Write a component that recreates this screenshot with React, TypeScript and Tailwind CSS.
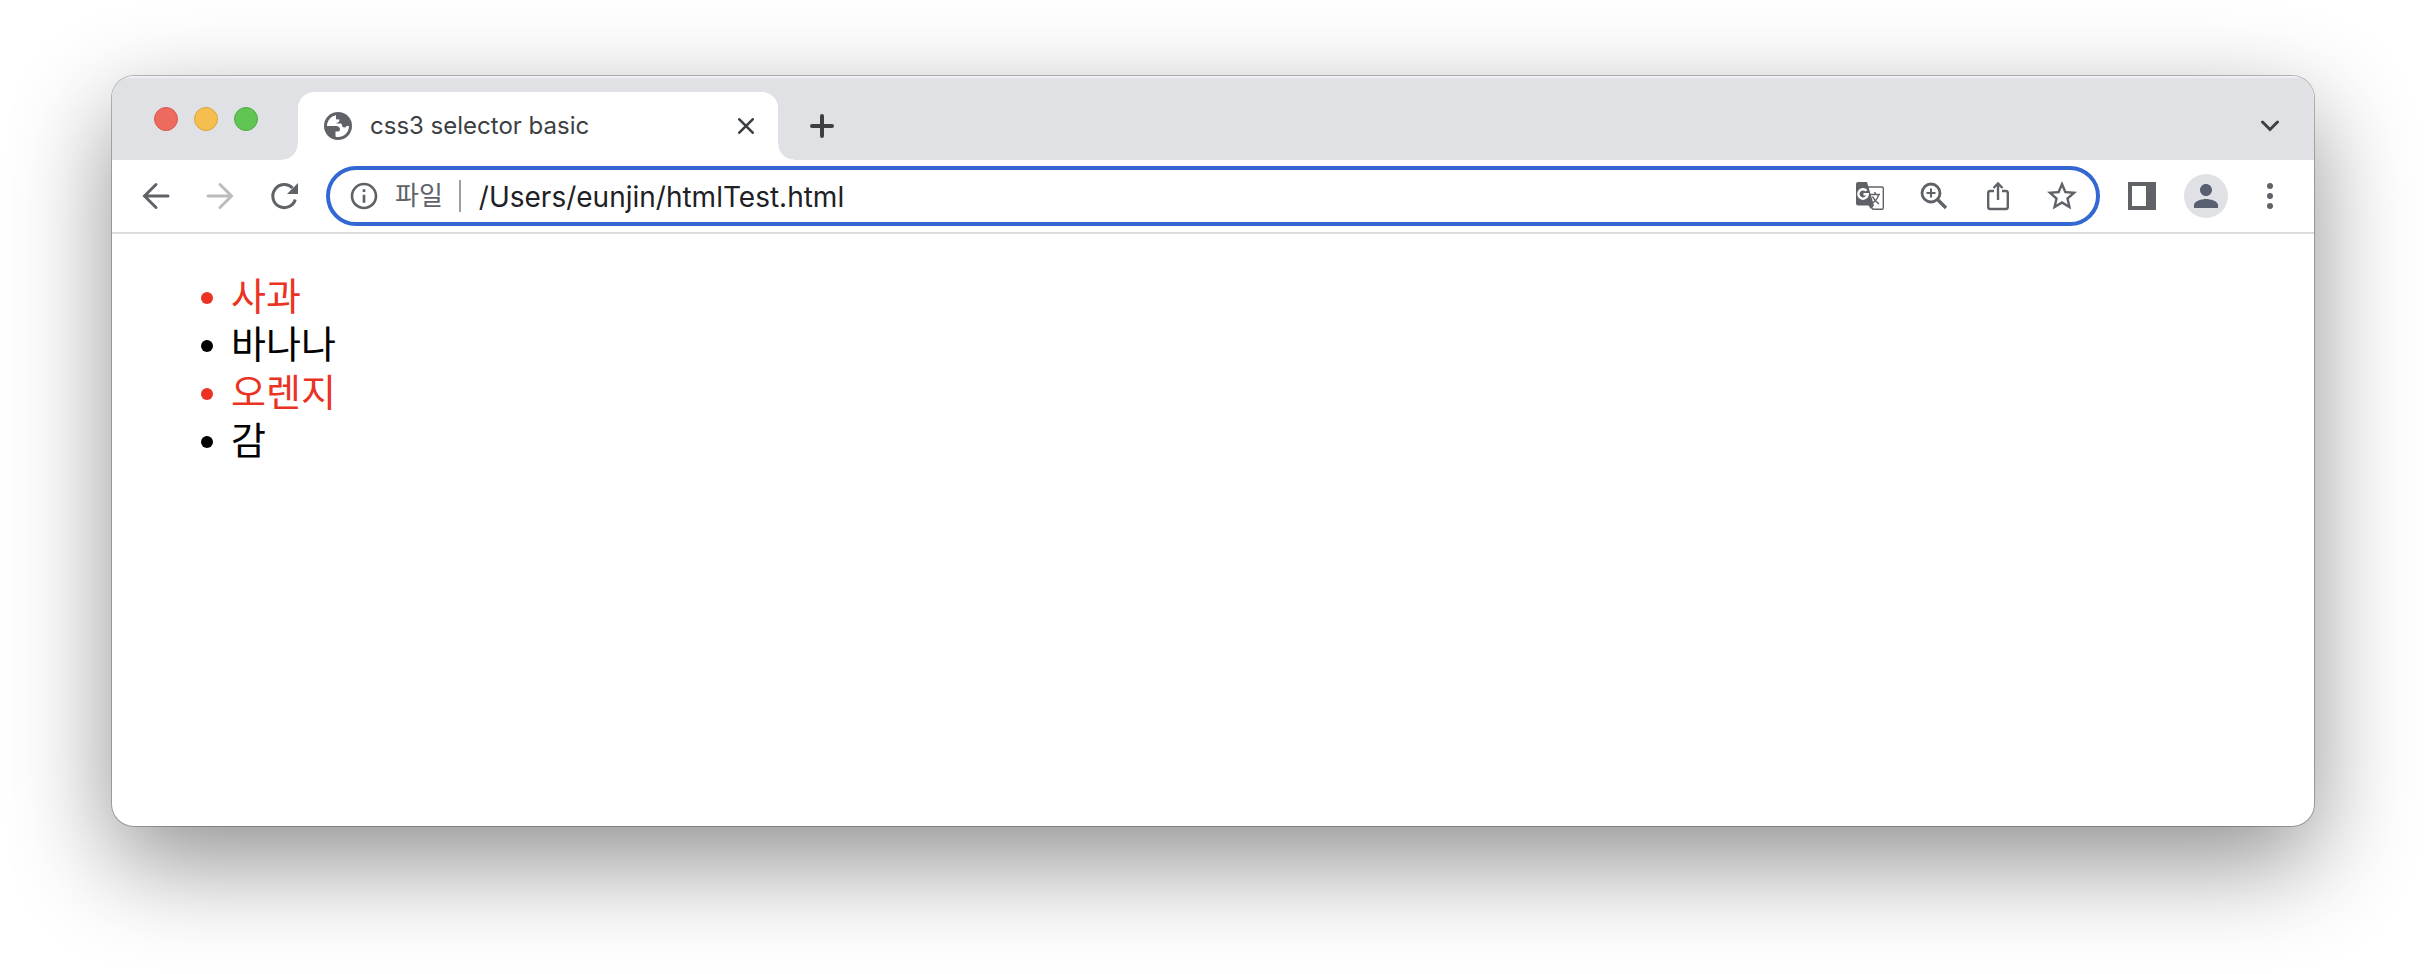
import type { ButtonHTMLAttributes, ReactNode } from "react"
import { MdOutlineInfo, MdPerson, MdStarBorder } from "react-icons/md"

type Fruit = { name: string; highlighted: boolean }

const FRUITS: Fruit[] = [
  { name: "사과", highlighted: true },
  { name: "바나나", highlighted: false },
  { name: "오렌지", highlighted: true },
  { name: "감", highlighted: false },
]

const TRAFFIC_LIGHTS = [
  { label: "닫기", className: "border-[#d9584c] bg-[#ed6a5e]" },
  { label: "최소화", className: "border-[#daa43c] bg-[#f5bf4f]" },
  { label: "확대", className: "border-[#4fab41] bg-[#61c554]" },
]

function IconButton({ label, className = "", children, ...rest }: { label: string; children: ReactNode } & ButtonHTMLAttributes<HTMLButtonElement>) {
  return (
    <button type="button" aria-label={label} className={`flex size-8 shrink-0 items-center justify-center ${className}`} {...rest}>
      {children}
    </button>
  )
}

function GlobeIcon() {
  return (
    <svg viewBox="0 0 28 28" className="size-7 text-[#5f6368]">
      <circle cx="14" cy="14" r="14" fill="currentColor" />
      <path
        d="M3 14C3 8.500 7 4 12 3.200V6.500Q12 7.500 13 7.500H15.500Q15.500 10.500 12.500 10.800V11.500H16.500Q18 11.500 18 13Q18 15.500 20.500 15.500Q22 15.500 22.500 14H25C25 20.500 20 25 14 25Q12.500 25 11.500 24.500V19.500H14Q16 19.500 16 17.500Q16 14 12 14Z"
        fill="#fff"
      />
    </svg>
  )
}

function ArrowIcon({ className = "" }: { className?: string }) {
  return (
    <svg viewBox="0 0 32 32" className={`size-8 ${className}`} fill="none" stroke="currentColor" strokeWidth="3" strokeLinecap="round">
      <path d="M28 16H5M16 4.5L4.5 16L16 27.5" />
    </svg>
  )
}

function ReloadIcon() {
  return (
    <svg viewBox="0 0 32 32" className="size-8">
      <path d="M27.3 19.5A11.5 11.5 0 1 1 24.5 8" fill="none" stroke="currentColor" strokeWidth="3" />
      <path d="M30 3V14H19Z" fill="currentColor" />
    </svg>
  )
}

function TranslateIcon() {
  return (
    <svg viewBox="0 0 28 28" className="size-7">
      <path d="M12 5H26A1.3 1.3 0 0 1 27.3 6.3V26A1.3 1.3 0 0 1 26 27.3H17L13 22" fill="none" stroke="currentColor" strokeWidth="1.4" />
      <path d="M2 0H11L18 23.5L15 27L12.5 23.5H2A2 2 0 0 1 0 21.5V2A2 2 0 0 1 2 0Z" fill="currentColor" />
      <path d="M10.5 8.8A4.7 4.7 0 1 0 11.7 12.3H7.5" fill="none" stroke="#fff" strokeWidth="2.4" />
      <path d="M14.5 12.5H24M19 10V12.500M22.5 12.5C22 16 19.5 19 16.5 21M16.5 14.5C18 18 20.5 20 23 22" fill="none" stroke="currentColor" strokeWidth="1.5" />
    </svg>
  )
}

function ZoomIcon() {
  return (
    <svg viewBox="0 0 28 28" className="size-7" fill="none" stroke="currentColor">
      <circle cx="11" cy="11" r="9" strokeWidth="2.8" />
      <path d="M17.5 17.5L26 26" strokeWidth="3.4" />
      <path d="M11 6.5V15.5M6.5 11H15.5" strokeWidth="2" />
    </svg>
  )
}

function ShareIcon() {
  return (
    <svg viewBox="0 0 28 30" className="h-[30px] w-7" fill="none" stroke="currentColor" strokeWidth="2.4">
      <path d="M10 10H6A2 2 0 0 0 4.2 12V26A2 2 0 0 0 6 28H22A2 2 0 0 0 23.8 26V12A2 2 0 0 0 22 10H18" />
      <path d="M14 19V3M9.5 7L14 2.5L18.5 7" />
    </svg>
  )
}

function TabStrip() {
  return (
    <header className="flex h-[84px] items-end bg-[#dfe1e5] shadow-[inset_0_2px_1px_#eff0f2]">
      <div className="flex h-full items-center gap-4 pt-0.5 pr-10 pl-[42px]">
        {TRAFFIC_LIGHTS.map((light) => (
          <button key={light.label} type="button" aria-label={light.label} className={`size-6 rounded-full border ${light.className}`} />
        ))}
      </div>

      {/* Active tab, with the flared feet on either side */}
      <div className="relative flex h-[68px] w-[480px] items-center rounded-t-2xl bg-white pr-4 pl-[26px] text-[#3c4043]">
        <span className="absolute bottom-0 -left-4 size-4 bg-[radial-gradient(circle_at_0_0,transparent_15px,white_16px)]" />
        <span className="absolute -right-4 bottom-0 size-4 bg-[radial-gradient(circle_at_100%_0,transparent_15px,white_16px)]" />
        <GlobeIcon />
        <h1 className="ml-[18px] flex-1 text-[24px] leading-8">css3 selector basic</h1>
        <IconButton label="탭 닫기">
          <svg viewBox="0 0 16 16" className="size-4" fill="none" stroke="currentColor" strokeWidth="2.6" strokeLinecap="round">
            <path d="M1.3 1.3L14.7 14.7M14.7 1.3L1.3 14.7" />
          </svg>
        </IconButton>
      </div>

      <div className="flex h-[68px] flex-1 items-center justify-between pr-7 pl-7 text-[#3c4043]">
        <IconButton label="새 탭">
          <svg viewBox="0 0 24 24" className="size-6" fill="none" stroke="currentColor" strokeWidth="4" strokeLinecap="round">
            <path d="M12 2V22M2 12H22" />
          </svg>
        </IconButton>
        <IconButton label="탭 검색">
          <svg viewBox="0 0 20 12" className="h-3 w-5" fill="none" stroke="currentColor" strokeWidth="3" strokeLinecap="round">
            <path d="M2.5 2L10 9.5L17.5 2" />
          </svg>
        </IconButton>
      </div>
    </header>
  )
}

function Toolbar() {
  return (
    <nav className="flex h-[74px] items-center border-b-2 border-[#dadce0] pr-7 pl-7 text-[#5f6368]">
      <div className="flex gap-8">
        <IconButton label="뒤로">
          <ArrowIcon />
        </IconButton>
        <IconButton label="앞으로" className="text-[#babcbe]" disabled>
          <ArrowIcon className="rotate-180" />
        </IconButton>
        <IconButton label="새로고침">
          <ReloadIcon />
        </IconButton>
      </div>

      <div className="ml-[26px] flex h-[60px] flex-1 items-center rounded-full border-4 border-[#3367d1] pr-[18px] pl-[18px]">
        <MdOutlineInfo className="size-8 shrink-0" />
        <label htmlFor="address" className="ml-[15px] shrink-0 text-[26px] leading-8">파일</label>
        <span className="ml-4 h-8 w-0.5 shrink-0 bg-[#9aa0a6]" />
        <input
          id="address"
          type="text"
          defaultValue="/Users/eunjin/htmlTest.html"
          className="ml-[18px] min-w-0 flex-1 pt-0.5 text-[28px] leading-9 text-[#202124] outline-none"
        />
        <div className="flex gap-8">
          <IconButton label="번역">
            <TranslateIcon />
          </IconButton>
          <IconButton label="확대/축소">
            <ZoomIcon />
          </IconButton>
          <IconButton label="공유">
            <ShareIcon />
          </IconButton>
          <IconButton label="북마크">
            <MdStarBorder className="size-9 shrink-0" />
          </IconButton>
        </div>
      </div>

      <div className="ml-[26px] flex items-center">
        <IconButton label="측면 패널">
          <svg viewBox="0 0 28 28" className="size-7">
            <path d="M0 0H28V28H0ZM4 4V24H18V4Z" fill="currentColor" fillRule="evenodd" />
          </svg>
        </IconButton>
        <button type="button" aria-label="프로필" className="ml-[26px] flex size-11 items-center justify-center rounded-full bg-[#dfe1e5] text-[#575f71]">
          <MdPerson className="size-9" />
        </button>
        <IconButton label="더보기" className="ml-[26px]">
          <svg viewBox="0 0 6 26" className="h-[26px] w-1.5" fill="currentColor">
            <circle cx="3" cy="3" r="3" />
            <circle cx="3" cy="13" r="3" />
            <circle cx="3" cy="23" r="3" />
          </svg>
        </IconButton>
      </div>
    </nav>
  )
}

export default function App() {
  return (
    <div className="flex min-h-screen flex-col bg-white px-28 pt-[76px] pb-[148px] font-[Inter,'Noto_Sans_CJK_KR',sans-serif]">
      <div className="flex flex-1 flex-col overflow-hidden rounded-[22px] bg-white shadow-[0_0_0_1px_rgba(0,0,0,0.25),0_36px_100px_rgba(0,0,0,0.44)]">
        <TabStrip />
        <Toolbar />
        <main className="flex-1 pt-[38px] pl-[89px]">
          <ul className="text-[38px] leading-[48px]">
            {FRUITS.map((fruit) => (
              <li key={fruit.name} className={`flex items-center ${fruit.highlighted ? "text-[#ea3323]" : "text-black"}`}>
                <span className="mt-1 mr-[18px] size-3 rounded-full bg-current" />
                <span>{fruit.name}</span>
              </li>
            ))}
          </ul>
        </main>
      </div>
    </div>
  )
}
